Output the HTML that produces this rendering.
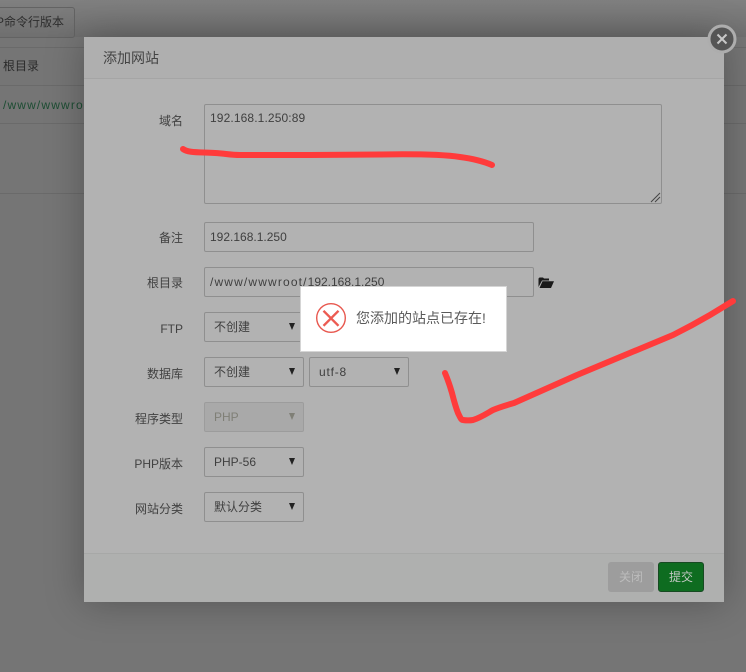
<!DOCTYPE html>
<html>
<head>
<meta charset="utf-8">
<style>
html,body{margin:0;padding:0;width:746px;height:672px;overflow:hidden;background:#757575;font-family:"Liberation Sans","Noto Sans CJK SC",sans-serif;}
.abs{position:absolute;}
#stage{position:relative;width:746px;height:672px;overflow:hidden;}
.bgline{position:absolute;left:0;width:746px;height:1px;background:#6a6a6a;}
.modal{position:absolute;left:84px;top:37px;width:640px;height:565px;background:#b2b2b2;box-shadow:0 0 36px rgba(0,0,0,.28);}
.head{position:absolute;left:84px;top:37px;width:640px;height:41px;background:#afafaf;border-bottom:1px solid #a5a5a5;}
.foot{position:absolute;left:84px;top:553px;width:640px;height:49px;background:#afb0af;border-top:1px solid #a7a8a7;box-sizing:border-box;}
.lab{position:absolute;width:99px;left:84px;text-align:right;font-size:12px;color:#414141;line-height:18px;white-space:nowrap;}
.inp{position:absolute;box-sizing:border-box;border:1px solid #8f8f8f;border-radius:2px;height:30px;left:204px;font-size:12px;color:#3f3f3f;line-height:28px;padding-left:5px;white-space:nowrap;overflow:hidden;}
.sel{padding-left:9px;width:100px;}
.arr{position:absolute;width:0;height:0;border-left:3px solid transparent;border-right:3px solid transparent;border-top:7px solid #222;}
</style>
</head>
<body>
<div id="stage">
  <div class="abs" style="left:0;top:0;width:746px;height:37px;background:linear-gradient(#808080,#6f6f6f);"></div>
  <div class="abs" style="left:-10px;top:7px;width:83px;height:29px;border:1px solid #636363;border-radius:3px;font-size:12px;color:#2e2e2e;line-height:29px;text-align:right;white-space:nowrap;"><span style="margin-right:10px;">P命令行版本</span></div>
  <div class="bgline" style="top:47px;"></div>
  <div class="bgline" style="top:85px;"></div>
  <div class="bgline" style="top:123px;"></div>
  <div class="bgline" style="top:193px;"></div>
  <div class="abs" style="left:3px;top:58px;font-size:12px;color:#2a2a2a;line-height:16px;">根目录</div>
  <div class="abs" style="left:3px;top:97px;font-size:12px;color:#1d4d33;line-height:16px;letter-spacing:1.15px;white-space:nowrap;">/www/wwwroot</div>

  <div class="modal"></div>
  <div class="head"></div>
  <div class="abs" style="left:103px;top:49px;font-size:14px;color:#444;line-height:18px;">添加网站</div>

  <div class="lab" style="top:112px;">域名</div>
  <div class="abs" style="left:204px;top:104px;width:458px;height:100px;box-sizing:border-box;border:1px solid #8f8f8f;border-radius:2px;font-size:12px;color:#3f3f3f;padding:5px;line-height:16px;letter-spacing:.12px;">192.168.1.250:89</div>
  <svg class="abs" style="left:650px;top:192px;" width="12" height="12"><path d="M1 10L10 1M5 10L10 5" stroke="#444" stroke-width="1" fill="none"/></svg>

  <div class="lab" style="top:229px;">备注</div>
  <div class="inp" style="top:222px;width:330px;">192.168.1.250</div>

  <div class="lab" style="top:274px;">根目录</div>
  <div class="inp" style="top:267px;width:330px;"><span style="letter-spacing:1.15px;">/www/wwwroot/</span>192.168.1.250</div>
  <svg class="abs" style="left:538px;top:277px;" width="16" height="12" viewBox="0 0 16 12"><path d="M0.500 10V1.500L1.500 0.500H5L6 1.500H11V3.500H4ZM4.500 4.300H16L13 11H1.500Z" fill="#1a1a1a"/></svg>

  <div class="lab" style="top:320px;">FTP</div>
  <div class="inp sel" style="top:312px;">不创建</div>
  <div class="arr" style="left:289px;top:323px;"></div>

  <div class="lab" style="top:365px;">数据库</div>
  <div class="inp sel" style="top:357px;">不创建</div>
  <div class="arr" style="left:289px;top:368px;"></div>
  <div class="inp sel" style="top:357px;left:309px;letter-spacing:.8px;">utf-8</div>
  <div class="arr" style="left:394px;top:368px;"></div>

  <div class="lab" style="top:410px;">程序类型</div>
  <div class="inp sel" style="top:402px;background:#a9a9a9;border-color:#9c9c9c;color:#7f7f76;">PHP</div>
  <div class="arr" style="left:289px;top:413px;border-top-color:#7f7f76;"></div>

  <div class="lab" style="top:455px;">PHP版本</div>
  <div class="inp sel" style="top:447px;">PHP-56</div>
  <div class="arr" style="left:289px;top:458px;"></div>

  <div class="lab" style="top:500px;">网站分类</div>
  <div class="inp sel" style="top:492px;">默认分类</div>
  <div class="arr" style="left:289px;top:503px;"></div>

  <div class="foot"></div>
  <div class="abs" style="left:608px;top:562px;width:46px;height:30px;background:#9d9d9d;border-radius:3px;color:#bcbcbc;font-size:12px;line-height:30px;text-align:center;">关闭</div>
  <div class="abs" style="left:658px;top:562px;width:46px;height:30px;box-sizing:border-box;background:#0e6c20;border:1px solid #174a22;border-radius:3px;color:#c4c8c4;font-size:12px;line-height:28px;text-align:center;">提交</div>

  <svg class="abs" style="left:0;top:0;" width="746" height="672">
    <circle cx="722" cy="39" r="13" fill="#555" stroke="#adadad" stroke-width="3"/>
    <path d="M717.500 34.500L726.500 43.500M726.500 34.500L717.500 43.500" stroke="#c8c8c8" stroke-width="2" fill="none"/>
    <g fill="none" stroke="#ff3b3b" stroke-linecap="round" stroke-linejoin="round" stroke-width="6">
      <path d="M183 149C188 153 200 152 215 153C225 153.500 230 155 240 155C290 155 330 155 380 154.500C410 154 440 154 460 157C475 159 485 162 492 165"/>
      <path d="M445 373C448 380 450 386 452 393C454 401 456 408 458 413C460 417 461 420 463 420C466 420.500 470 420.500 473 420C480 418 486 414 493 410C500 407 507 405 514 403L577 375L673 335C685 329 698 322 710 315L733 301"/>
    </g>
  </svg>

  <div class="abs" style="left:300px;top:286px;width:207px;height:66px;box-sizing:border-box;background:#fff;border:1px solid #d5d5d5;"></div>
  <svg class="abs" style="left:315px;top:302px;" width="32" height="32">
    <circle cx="16" cy="16" r="14.300" fill="none" stroke="#e8584f" stroke-width="1.400"/>
    <path d="M8.500 8.800L23.500 23.800M23.500 8.800L8.500 23.800" stroke="#ec5b52" stroke-width="2.400" fill="none"/>
  </svg>
  <div class="abs" style="left:356px;top:309px;font-size:14px;color:#5a5a5a;line-height:19px;white-space:nowrap;">您添加的站点已存在!</div>
</div>
</body>
</html>
